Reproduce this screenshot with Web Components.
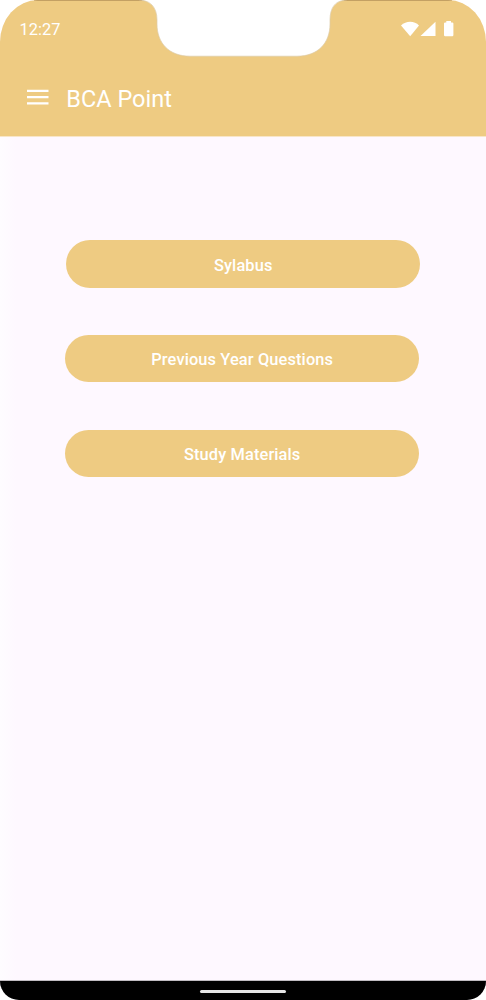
<!DOCTYPE html>
<html lang="en">
<head>
<meta charset="UTF-8">
<meta name="viewport" content="width=device-width, initial-scale=1.0">
<title>BCA Point</title>
<style>
    body {
        margin: 0;
        background: #fff;
        font-family: Roboto, "Liberation Sans", sans-serif;
        color: #fff;
    }
</style>
</head>
<body>
<phone-screen>
    <status-bar slot="top" time="12:27"></status-bar>
    <app-bar slot="top">BCA Point</app-bar>
    <menu-list>
        <pill-button style="margin-left: 1px">Sylabus</pill-button>
        <pill-button>Previous Year Questions</pill-button>
        <pill-button>Study Materials</pill-button>
    </menu-list>
    <nav-handle slot="bottom"></nav-handle>
</phone-screen>

<script>
class PhoneScreen extends HTMLElement {
    constructor() {
        super();
        this.attachShadow({ mode: 'open' });
        this.shadowRoot.innerHTML = `
            <style>
                :host {
                    display: flex;
                    flex-direction: column;
                    position: relative;
                    width: 486px;
                    height: 1000px;
                    overflow: hidden;
                    border-radius: 38px 38px 19px 19px / 42px 42px 19px 19px;
                    background: #fef8ff;
                }
                header {
                    height: 136px;
                    background: #eecb82;
                    border-bottom: 1px solid #f8e6c8;
                    box-sizing: content-box;
                }
                main {
                    flex: 1;
                    background: linear-gradient(90deg, #fefcff, #fef8ff 16px);
                }
                .notch {
                    position: absolute;
                    top: 0;
                    left: 136px;
                }
                .edge {
                    position: absolute;
                    top: 0;
                    left: 34px;
                    width: 418px;
                    height: 1px;
                    background: #c3a063;
                }
            </style>
            <header><slot name="top"></slot></header>
            <main><slot></slot></main>
            <slot name="bottom"></slot>
            <div class="edge"></div>
            <svg class="notch" width="215" height="57" viewBox="0 0 215 57">
                <path d="M2 0C14 0 21 7 21 20V24C21 43 33 56.2 54 56.2H161C182 56.2 194 43 194 24V20C194 7 200 0 212 0Z" fill="#fff"/>
                <path d="M6 .5C15 1 21 8 21 20V24C21 43 33 56.2 54 56.2H161C182 56.2 194 43 194 24V20C194 8 199 1 208 .5" fill="none" stroke="#dccba9" stroke-width=".7"/>
            </svg>
        `;
    }
}

class StatusBar extends HTMLElement {
    constructor() {
        super();
        this.attachShadow({ mode: 'open' });
    }

    connectedCallback() {
        const time = this.getAttribute('time');
        this.shadowRoot.innerHTML = `
            <style>
                :host {
                    display: flex;
                    align-items: center;
                    justify-content: space-between;
                    height: 58px;
                    padding: 0 31px 0 19.6px;
                    font-size: 16.4px;
                    line-height: 20px;
                }
                span {
                    padding-top: 2px;
                }
                svg {
                    display: block;
                }
            </style>
            <span>${time}</span>
            <svg width="54" height="18" viewBox="0 0 54 18" fill="#fff">
                <path d="M0 5.5C5 .5 13.5 .5 18 5.5L9.2 16.2Z"/>
                <path d="M19.5 16L34.5 1.8V16Z"/>
                <path d="M45.3 1H50V2.4H51.2Q52.4 2.4 52.4 3.6V15.1Q52.4 16.3 51.2 16.3H44.2Q43 16.3 43 15.1V3.6Q43 2.4 44.2 2.4H45.3Z"/>
            </svg>
        `;
    }
}

class AppBar extends HTMLElement {
    constructor() {
        super();
        this.attachShadow({ mode: 'open' });
        this.shadowRoot.innerHTML = `
            <style>
                :host {
                    display: flex;
                    align-items: center;
                    gap: 17.3px;
                    height: 78px;
                    padding-left: 27px;
                }
                h1 {
                    margin: 4px 0 0;
                    font-size: 23.5px;
                    font-weight: 400;
                    line-height: 28px;
                }
            </style>
            <svg width="22" height="16" viewBox="0 0 22 16" fill="#fff">
                <path d="M0 .8H21.5V3H0ZM0 7H21.5V9.2H0ZM0 13.2H21.5V15.4H0Z"/>
            </svg>
            <h1><slot></slot></h1>
        `;
    }
}

class MenuList extends HTMLElement {
    constructor() {
        super();
        this.attachShadow({ mode: 'open' });
        this.shadowRoot.innerHTML = `
            <style>
                :host {
                    display: flex;
                    flex-direction: column;
                    gap: 47.3px;
                    padding: 103.4px 0 0 65px;
                }
            </style>
            <slot></slot>
        `;
    }
}

class PillButton extends HTMLElement {
    constructor() {
        super();
        this.attachShadow({ mode: 'open' });
        this.shadowRoot.innerHTML = `
            <style>
                :host {
                    display: block;
                    width: 354.4px;
                }
                button {
                    display: block;
                    width: 100%;
                    height: 47.3px;
                    padding: 2px 0 0;
                    border: 0;
                    border-radius: 24px;
                    background: #eecb82;
                    color: #fff;
                    font: 500 16.4px Roboto, "Liberation Sans", sans-serif;
                    letter-spacing: 0.12px;
                }
            </style>
            <button><slot></slot></button>
        `;
    }
}

class NavHandle extends HTMLElement {
    constructor() {
        super();
        this.attachShadow({ mode: 'open' });
        this.shadowRoot.innerHTML = `
            <style>
                :host {
                    display: flex;
                    align-items: center;
                    justify-content: center;
                    height: 19px;
                    padding-top: 2px;
                    box-sizing: border-box;
                    background: #000;
                    box-shadow: 0 -1px #c0bcc1;
                }
                div {
                    width: 86px;
                    height: 3px;
                    border-radius: 2px;
                    background: #e6e6e6;
                }
            </style>
            <div></div>
        `;
    }
}

customElements.define('phone-screen', PhoneScreen);
customElements.define('status-bar', StatusBar);
customElements.define('app-bar', AppBar);
customElements.define('menu-list', MenuList);
customElements.define('pill-button', PillButton);
customElements.define('nav-handle', NavHandle);
</script>
</body>
</html>
